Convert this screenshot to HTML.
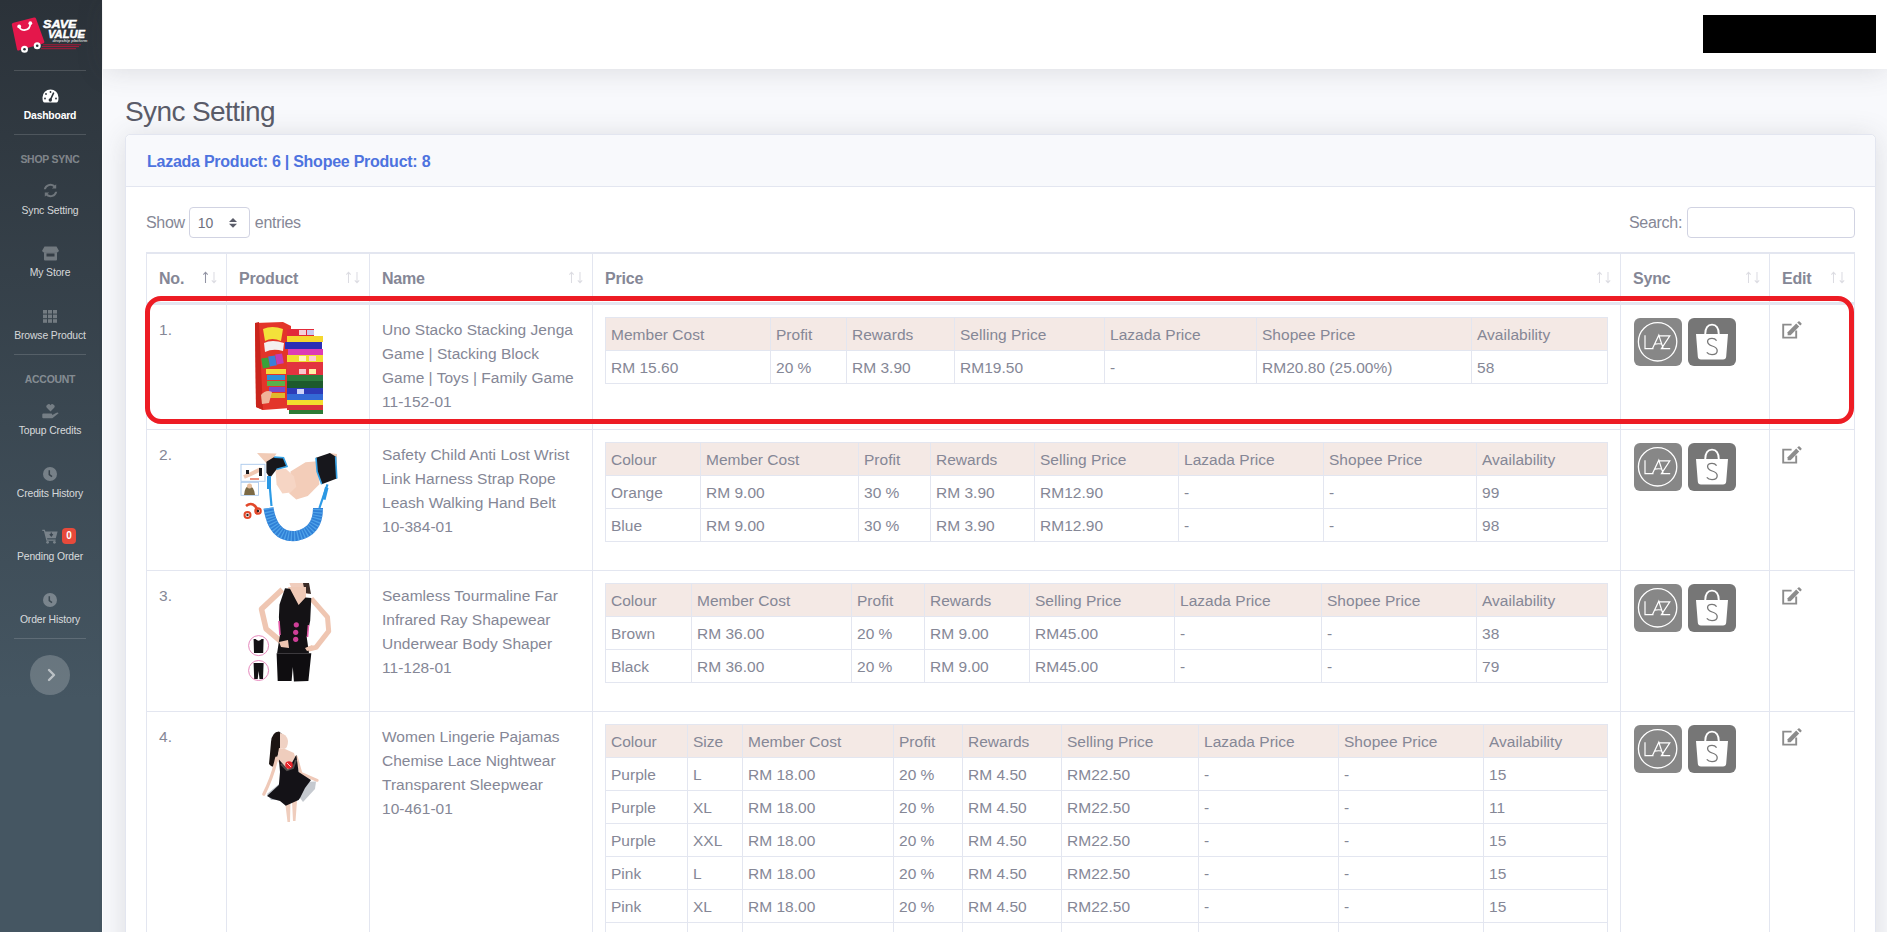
<!DOCTYPE html>
<html><head><meta charset="utf-8">
<style>
*{box-sizing:border-box;margin:0;padding:0}
html,body{width:1887px;height:932px;overflow:hidden;background:#f8f9fc;font-family:"Liberation Sans",sans-serif;color:#858796}
#sb{position:absolute;left:0;top:0;width:102px;height:932px;background:linear-gradient(180deg,#2b3239 0px,#455662 700px)}
#sbline{position:absolute;left:102px;top:0;width:1px;height:932px;background:#fff}
#top{position:absolute;left:103px;top:0;width:1784px;height:69px;background:#fff;box-shadow:0 2px 28px 0 rgba(58,59,69,.15);z-index:2}
#blk{position:absolute;left:1600px;top:15px;width:173px;height:38px;background:#000}
#title{position:absolute;left:125px;top:94px;font-size:28px;line-height:36px;color:#5a5c69;letter-spacing:-0.6px;white-space:nowrap}
#card{position:absolute;left:125px;top:134px;width:1751px;height:900px;background:#fff;border:1px solid #e3e6f0;border-radius:5px;box-shadow:0 2px 28px 0 rgba(58,59,69,.15)}
#chead{position:absolute;left:0;top:0;width:1749px;height:52px;background:#f8f9fc;border-bottom:1px solid #e3e6f0;border-radius:5px 5px 0 0}
#chead span{position:absolute;left:21px;top:15px;font-size:16px;line-height:24px;font-weight:bold;color:#4e73df;letter-spacing:-0.25px;white-space:nowrap}

#len{position:absolute;left:146px;top:207px;height:31px;font-size:16px;line-height:31px;white-space:nowrap;letter-spacing:-0.3px}
#len .sel{display:inline-block;position:relative;vertical-align:top;width:61px;height:31px;margin:0 5px 0 4px;border:1px solid #d1d3e2;border-radius:4px;background:#fff;font-size:14px;color:#6e707e;line-height:31px;padding-left:8px;letter-spacing:0}
#len .sel svg{position:absolute;left:39px;top:10px}
#srch{position:absolute;left:1629px;top:207px;height:31px;font-size:16px;line-height:31px;white-space:nowrap;letter-spacing:-0.3px}
#srch .inp{position:absolute;left:58px;top:0;width:168px;height:31px;border:1px solid #d1d3e2;border-radius:4px;background:#fff}
#mt{position:absolute;left:146px;top:252px;width:1708px;border-collapse:collapse;table-layout:fixed;font-size:15.5px;line-height:24px;letter-spacing:0.02px}
#mt th,#mt td{border:1px solid #e3e6f0;padding:13px 12px 11px 12px;vertical-align:top;text-align:left;white-space:nowrap}
#mt th{border-top:2px solid #e3e6f0;border-bottom:3px solid #e3e6f0;font-weight:bold;position:relative;font-size:16px;letter-spacing:-0.2px;padding-top:13px;padding-bottom:11px}
#mt th .ar{position:absolute;top:17px;right:9px}
.it{border-collapse:collapse;width:1002px;table-layout:fixed;margin-top:-1px;margin-bottom:17px}
.it td,.it th{border:1px solid #e3e6f0 !important;padding:5px 5px 3px 5px !important;font-weight:normal !important;height:33px !important;line-height:24px;white-space:nowrap}
.it tr.h td{background:#f4e9e5}
.pimg{display:block;width:100px;height:100px;margin-top:-1px;margin-bottom:1px}
.sync{position:relative;height:48px;margin-top:0}
.laz,.shp{position:absolute;top:0;width:48px;height:48px;border-radius:6px}
.laz{left:1px;background:#878787}
.shp{left:55px;background:#767676}
.edit{position:absolute}
#red{position:absolute;left:145px;top:296px;width:1709px;height:128px;border:5px solid #ed1c24;border-radius:16px;z-index:5}

.sbt{position:absolute;left:0;width:100px;text-align:center;font-size:10.4px;letter-spacing:-.12px;margin-top:0.5px;line-height:12px;color:rgba(255,255,255,.8);white-space:nowrap}
.sbh{position:absolute;left:0;width:100px;text-align:center;font-size:10.4px;letter-spacing:-.2px;margin-top:0.5px;line-height:12px;font-weight:bold;color:rgba(255,255,255,.4);white-space:nowrap}
.sbd{position:absolute;left:14px;width:72px;height:1px;background:rgba(255,255,255,.15)}
.ic{position:absolute}
</style></head><body>

<div id="sb">
<svg class="ic" style="left:0;top:0" width="102" height="70" viewBox="0 0 102 70">
 <path d="M13.5 22.8 L34 17.6 Q35.6 17.3 36.1 18.8 L44.3 41.6 Q44.6 43 43.2 43.4 L18.6 50.6 Q17.3 50.9 17 49.6 L11.8 24.6 Q11.6 23.2 13.5 22.8Z" fill="#e4174b"/>
 <path d="M19.2 26.4 C20.6 31.8 30.2 31.6 30.3 23.2" stroke="#fff" stroke-width="1.8" fill="none" stroke-linecap="round"/>
 <circle cx="19.2" cy="26.4" r="1.9" fill="#fff"/><circle cx="30.3" cy="23.2" r="1.9" fill="#fff"/>
 <circle cx="24.5" cy="49.2" r="3.5" fill="#fff"/><circle cx="24.5" cy="49.2" r="1.3" fill="#2b3239"/>
 <circle cx="37.2" cy="45.8" r="3.5" fill="#fff"/><circle cx="37.2" cy="45.8" r="1.3" fill="#2b3239"/>
 <text x="43" y="28" font-family="Liberation Sans" font-weight="bold" font-style="italic" font-size="11.5" fill="#fff" stroke="#fff" stroke-width="0.5" textLength="33.5" lengthAdjust="spacingAndGlyphs">SAVE</text>
 <text x="48" y="38" font-family="Liberation Sans" font-weight="bold" font-style="italic" font-size="11.5" fill="#fff" stroke="#fff" stroke-width="0.5" textLength="37" lengthAdjust="spacingAndGlyphs">VALUE</text>
 <text x="52.5" y="42" font-family="Liberation Sans" font-weight="bold" font-style="italic" font-size="2.9" fill="rgba(255,255,255,.75)" textLength="35" lengthAdjust="spacingAndGlyphs">dropship platform</text>
 <rect x="43" y="44.2" width="38" height="1.1" fill="#9a1d3a"/>
 <rect x="42" y="46" width="37" height="1.1" fill="#9a1d3a"/>
 <rect x="41" y="48.1" width="35" height="1.1" fill="#9a1d3a"/>
</svg>
<div class="sbd" style="top:70px"></div>
<svg class="ic" style="left:42px;top:89px" width="17" height="14" viewBox="0 0 17 14">
 <path d="M8.5 0.5 A8 8 0 0 1 16.5 8.5 Q16.5 13.5 14.5 13.5 H2.5 Q0.5 13.5 0.5 8.5 A8 8 0 0 1 8.5 0.5Z" fill="#fff"/>
 <circle cx="8.5" cy="3" r="0.9" fill="#2b3239"/><circle cx="4" cy="5" r="0.9" fill="#2b3239"/><circle cx="3" cy="9.5" r="0.9" fill="#2b3239"/><circle cx="14" cy="9.5" r="0.9" fill="#2b3239"/>
 <path d="M8.3 11 L11.5 4.2" stroke="#2b3239" stroke-width="1.6" stroke-linecap="round"/><circle cx="8.3" cy="11" r="1.7" fill="#2b3239"/>
</svg>
<div class="sbh" style="top:109px;color:#fff">Dashboard</div>
<div class="sbd" style="top:134px"></div>
<div class="sbh" style="top:153px">SHOP SYNC</div>
<svg class="ic" style="left:43px;top:183px" width="15" height="15" viewBox="0 0 15 15">
 <path d="M13.2 1.2 V5.6 H8.8 L10.5 3.9 A4.8 4.8 0 0 0 2.8 6.2 H0.8 A6.8 6.8 0 0 1 11.9 2.5Z" fill="rgba(255,255,255,.3)"/>
 <path d="M1.8 13.8 V9.4 H6.2 L4.5 11.1 A4.8 4.8 0 0 0 12.2 8.8 H14.2 A6.8 6.8 0 0 1 3.1 12.5Z" fill="rgba(255,255,255,.3)"/>
</svg>
<div class="sbt" style="top:204px">Sync Setting</div>
<svg class="ic" style="left:42px;top:246px" width="17" height="15" viewBox="0 0 17 15">
 <path d="M2.5 0.5 H14.5 L16.8 4.5 Q16.8 6.5 14.8 6.5 H2.2 Q0.2 6.5 0.2 4.5Z" fill="rgba(255,255,255,.3)"/>
 <path d="M2 6.5 H15 V13.5 Q15 14.5 14 14.5 H3 Q2 14.5 2 13.5Z" fill="rgba(255,255,255,.3)"/>
 <rect x="4.5" y="7.5" width="8" height="3" fill="#343d45"/>
</svg>
<div class="sbt" style="top:266px">My Store</div>
<svg class="ic" style="left:43px;top:310px" width="14" height="13" viewBox="0 0 14 13">
 <g fill="rgba(255,255,255,.3)"><rect x="0" y="0" width="4" height="3.6"/><rect x="5" y="0" width="4" height="3.6"/><rect x="10" y="0" width="4" height="3.6"/>
 <rect x="0" y="4.6" width="4" height="3.6"/><rect x="5" y="4.6" width="4" height="3.6"/><rect x="10" y="4.6" width="4" height="3.6"/>
 <rect x="0" y="9.2" width="4" height="3.6"/><rect x="5" y="9.2" width="4" height="3.6"/><rect x="10" y="9.2" width="4" height="3.6"/></g>
</svg>
<div class="sbt" style="top:329px">Browse Product</div>
<div class="sbd" style="top:354px"></div>
<div class="sbh" style="top:373px">ACCOUNT</div>
<svg class="ic" style="left:42px;top:404px" width="17" height="15" viewBox="0 0 17 15">
 <path d="M8.5 7.5 L4.8 3.8 A2.2 2.2 0 0 1 8.5 1.2 A2.2 2.2 0 0 1 12.2 3.8Z" fill="rgba(255,255,255,.3)"/>
 <path d="M0.3 10.5 Q0.3 9.5 1.3 9.5 H9 Q10.3 9.5 10.3 10.6 Q10.3 11.5 9 11.5 H6.5 H9.5 L14 9 Q16 8 16.6 9.3 L11 13.8 Q10.5 14.3 9.5 14.3 H1.3 Q0.3 14.3 0.3 13.3Z" fill="rgba(255,255,255,.3)"/>
</svg>
<div class="sbt" style="top:424px">Topup Credits</div>
<svg class="ic" style="left:43px;top:467px" width="14" height="14" viewBox="0 0 14 14">
 <circle cx="7" cy="7" r="7" fill="rgba(255,255,255,.3)"/><path d="M6.3 3.2 V7.6 L9 9.6" stroke="#38434c" stroke-width="1.5" fill="none"/>
</svg>
<div class="sbt" style="top:487px">Credits History</div>
<svg class="ic" style="left:42px;top:529px" width="16" height="15" viewBox="0 0 16 15">
 <path d="M0.3 0.8 H2.8 L3.4 2.5 H15.6 L13.8 9.2 H5 L5.4 10.6 H13.6 V11.8 H4.4 L1.9 2.1 H0.3Z" fill="rgba(255,255,255,.3)"/>
 <circle cx="5.6" cy="13.3" r="1.4" fill="rgba(255,255,255,.3)"/><circle cx="12.4" cy="13.3" r="1.4" fill="rgba(255,255,255,.3)"/>
 <path d="M9.3 3.6 V6.3 M7.8 5.2 L9.3 7 L10.8 5.2" stroke="#3a4650" stroke-width="1.2" fill="none"/>
</svg>
<div style="position:absolute;left:62px;top:528px;width:14px;height:16px;border-radius:4px;background:#e74a3b;color:#fff;font-size:10px;font-weight:bold;line-height:16px;text-align:center">0</div>
<div class="sbt" style="top:550px">Pending Order</div>
<svg class="ic" style="left:43px;top:593px" width="14" height="14" viewBox="0 0 14 14">
 <circle cx="7" cy="7" r="7" fill="rgba(255,255,255,.3)"/><path d="M6.3 3.2 V7.6 L9 9.6" stroke="#3d4a53" stroke-width="1.5" fill="none"/>
</svg>
<div class="sbt" style="top:613px">Order History</div>
<div class="sbd" style="top:638px"></div>
<div style="position:absolute;left:30px;top:655px;width:40px;height:40px;border-radius:50%;background:rgba(255,255,255,.2)"></div>
<svg class="ic" style="left:47px;top:668px" width="10" height="14" viewBox="0 0 10 14">
 <path d="M2 2 L7 7 L2 12" stroke="rgba(255,255,255,.55)" stroke-width="2.4" fill="none" stroke-linecap="round" stroke-linejoin="round"/>
</svg>
</div>

<div id="sbline"></div>
<div id="top"><div id="blk"></div></div>
<div id="title">Sync Setting</div>
<div id="card">
  <div id="chead"><span>Lazada Product: 6 | Shopee Product: 8</span></div>
</div>

<div id="len">Show<span class="sel">10<svg width="8" height="10" viewBox="0 0 8 10"><path d="M4 0L8 4H0z M0 5.8H8L4 9.8z" fill="#5a5c69"/></svg></span>entries</div>
<div id="srch">Search:<div class="inp"></div></div>
<table id="mt"><colgroup><col style="width:80px"><col style="width:143px"><col style="width:223px"><col style="width:1028px"><col style="width:149px"><col style="width:85px"></colgroup><tr><th>No.<svg class="ar" width="14" height="13" viewBox="0 0 14 13"><path d="M2.5 1.3V12 M0.3 3.6L2.5 1.3L4.7 3.6" stroke="#9193a3" stroke-width="1.05" fill="none"/><path d="M11 1V11.7 M8.8 9.4L11 11.7L13.2 9.4" stroke="#dcdce2" stroke-width="1.05" fill="none"/></svg></th><th>Product<svg class="ar" width="14" height="13" viewBox="0 0 14 13"><path d="M2.5 1.3V12 M0.3 3.6L2.5 1.3L4.7 3.6" stroke="#dcdce2" stroke-width="1.05" fill="none"/><path d="M11 1V11.7 M8.8 9.4L11 11.7L13.2 9.4" stroke="#dcdce2" stroke-width="1.05" fill="none"/></svg></th><th>Name<svg class="ar" width="14" height="13" viewBox="0 0 14 13"><path d="M2.5 1.3V12 M0.3 3.6L2.5 1.3L4.7 3.6" stroke="#dcdce2" stroke-width="1.05" fill="none"/><path d="M11 1V11.7 M8.8 9.4L11 11.7L13.2 9.4" stroke="#dcdce2" stroke-width="1.05" fill="none"/></svg></th><th>Price<svg class="ar" width="14" height="13" viewBox="0 0 14 13"><path d="M2.5 1.3V12 M0.3 3.6L2.5 1.3L4.7 3.6" stroke="#dcdce2" stroke-width="1.05" fill="none"/><path d="M11 1V11.7 M8.8 9.4L11 11.7L13.2 9.4" stroke="#dcdce2" stroke-width="1.05" fill="none"/></svg></th><th>Sync<svg class="ar" width="14" height="13" viewBox="0 0 14 13"><path d="M2.5 1.3V12 M0.3 3.6L2.5 1.3L4.7 3.6" stroke="#dcdce2" stroke-width="1.05" fill="none"/><path d="M11 1V11.7 M8.8 9.4L11 11.7L13.2 9.4" stroke="#dcdce2" stroke-width="1.05" fill="none"/></svg></th><th>Edit<svg class="ar" width="14" height="13" viewBox="0 0 14 13"><path d="M2.5 1.3V12 M0.3 3.6L2.5 1.3L4.7 3.6" stroke="#dcdce2" stroke-width="1.05" fill="none"/><path d="M11 1V11.7 M8.8 9.4L11 11.7L13.2 9.4" stroke="#dcdce2" stroke-width="1.05" fill="none"/></svg></th></tr><tr><td>1.</td><td><div class="pimg"><svg width="100" height="100" viewBox="0 0 100 100">
<path d="M16 6 L44 5 L52 9 L51 91 L24 93 L17 90Z" fill="#e3352a"/>
<path d="M16 6 L20 5 L24 93 L17 90Z" fill="#c9241c"/>
<path d="M24 12 Q33 8 44 12 L42 24 Q33 20 26 24Z" fill="#f3e23a"/>
<path d="M25 26 Q33 22 45 26 L44 34 Q34 31 26 35Z" fill="#f4f0f0"/>
<rect x="23" y="41" width="7" height="10" fill="#3aa33a" transform="rotate(-10 26 46)"/><rect x="30" y="39" width="7" height="10" fill="#3c7ed8" transform="rotate(-10 33 44)"/><rect x="37" y="37" width="7" height="10" fill="#c23bb7" transform="rotate(-10 40 42)"/>
<rect x="27" y="52" width="20" height="5" fill="#f4d93a"/><rect x="28" y="58" width="18" height="5" fill="#2d8fd8"/><rect x="28" y="64" width="18" height="5" fill="#5bb04a"/><rect x="30" y="70" width="16" height="5" fill="#7a49c8"/><rect x="30" y="76" width="16" height="5" fill="#e0b92c"/>
<path d="M22 78 Q27 72 33 75 L30 86 L23 87Z" fill="#f0b39a"/>
<rect x="48" y="12" width="27" height="7" fill="#e22a3a"/><rect x="48" y="19" width="36" height="6" fill="#f5d82e"/><rect x="46" y="25" width="37" height="7" fill="#2b2fb5"/><rect x="49" y="32" width="35" height="6" fill="#dd3bb5"/>
<rect x="48" y="38" width="36" height="7" fill="#f2dd30"/><rect x="48" y="45" width="36" height="6" fill="#e2333f"/><rect x="48" y="51" width="36" height="7" fill="#e2333f"/><rect x="48" y="58" width="36" height="6" fill="#2c7b3c"/>
<rect x="48" y="64" width="36" height="7" fill="#1d5a2c"/><rect x="48" y="71" width="36" height="6" fill="#2d3bb8"/><rect x="48" y="77" width="36" height="6" fill="#3369d6"/><rect x="48" y="83" width="36" height="5" fill="#f2de2e"/>
<rect x="48" y="88" width="36" height="5" fill="#d9303a"/><rect x="50" y="93" width="34" height="4" fill="#2e7a36"/>
<rect x="60" y="13" width="7" height="5" fill="#f5d0d8"/><rect x="68" y="13" width="7" height="5" fill="#c9c9f0"/><rect x="60" y="39" width="7" height="5" fill="#fff3c0"/><rect x="70" y="39" width="7" height="5" fill="#fbd0d6"/>
<rect x="60" y="52" width="7" height="5" fill="#f9c6cc"/><rect x="70" y="52" width="7" height="5" fill="#fff0a8"/><rect x="58" y="72" width="7" height="5" fill="#d0d4f8"/>
</svg></div></td><td>Uno Stacko Stacking Jenga<br>Game | Stacking Block<br>Game | Toys | Family Game<br>11-152-01</td><td><table class="it"><colgroup><col style="width:165px"><col style="width:76px"><col style="width:108px"><col style="width:150px"><col style="width:152px"><col style="width:215px"><col style="width:136px"></colgroup><tr class="h"><td>Member Cost</td><td>Profit</td><td>Rewards</td><td>Selling Price</td><td>Lazada Price</td><td>Shopee Price</td><td>Availability</td></tr><tr><td>RM 15.60</td><td>20 %</td><td>RM 3.90</td><td>RM19.50</td><td>-</td><td>RM20.80 (25.00%)</td><td>58</td></tr></table></td><td><div class="sync"><div class="laz"><svg width="48" height="48" viewBox="0 0 48 48"><circle cx="23.6" cy="23.8" r="19.2" stroke="#fff" stroke-width="1.3" fill="none"/>
<path d="M11 17.2 V30.6 H19.5 M18.5 30.6 L24.8 17.2 L29.2 30.6 M20.8 26.2 Q24 25.4 27.6 26 M25.2 17.8 H35.8 L27.4 30.6 H36.2" stroke="#fff" stroke-width="1.2" fill="none" stroke-linejoin="miter"/></svg></div><div class="shp"><svg width="48" height="48" viewBox="0 0 48 48"><path d="M17.2 16.2 Q17.4 6.6 24 6.6 Q30.6 6.6 30.8 16.2" stroke="#fff" stroke-width="1.9" fill="none"/>
<path d="M8 16 H40 L38.2 38.6 Q38 41.6 35 41.6 H13 Q10 41.6 9.8 38.6Z" fill="#fff"/>
<path d="M28.6 22.6 Q27 20.4 24 20.4 Q19.4 20.4 19.6 23.8 Q19.8 26.6 24.2 28 Q29.4 29.6 29.2 33 Q29 36.6 24 36.6 Q20.4 36.6 18.8 34.4" stroke="#777" stroke-width="1.3" fill="none"/></svg></div></div></td><td><svg class="edit" style="margin:3px 0 0 -1px;display:block" width="21" height="18" viewBox="0 0 21 18">
<path d="M10.6 3.6 H2.2 V16.6 H15.2 V9.6" stroke="#8c8c8c" stroke-width="1.9" fill="none"/>
<path d="M6.6 14.2 L6.6 11.2 L15.2 2.6 L18.2 5.6 L9.6 14.2Z" fill="#8c8c8c"/>
<path d="M16.2 1.6 L17.4 0.4 Q18 -0.1 18.6 0.4 L20.4 2.2 Q20.9 2.8 20.4 3.4 L19.2 4.6Z" fill="#8c8c8c"/></svg></td></tr><tr><td>2.</td><td><div class="pimg"><svg width="100" height="100" viewBox="0 0 100 100">
<path d="M18 11 L37.6 11.6 L31.8 19.2 L27.1 20.9Z" fill="#f1cbb6"/>
<path d="M90 11 L98 12 L98 22 L93 20Z" fill="#f1cbb6"/>
<path d="M51.5 29.6 L66.5 20.3 L78.1 19.2 L80.4 42.3 L68.8 54 L57.3 57.4 L50.3 51.6Z" fill="#f3cdb9"/>
<path d="M36.4 27.3 L46.8 26.7 L54.9 34.2 L57.3 44.7 L51.5 50.5 L43.4 51.6 L37.6 42.4Z" fill="#f6d5c4"/>
<path d="M27.4 19.8 L35.2 15.1 L44.5 15.7 L48 24.4 L37.6 27.3 L31 36 L27.4 30.8Z" fill="#17171c"/>
<path d="M35.2 15.1 L44.5 15.7 L48 24.4 L37.6 27.3" stroke="#35a2e6" stroke-width="1.6" fill="none"/>
<path d="M77 15.7 L90.9 11 L96.6 14.5 L97.8 36.6 L82.7 42.3 L78.1 29.6Z" fill="#17171c"/>
<path d="M77 15.7 L78.1 29.6 L82.7 42.3 M96.6 14.5 L97.8 36.6" stroke="#35a2e6" stroke-width="1.6" fill="none"/>
<path d="M29.8 34 L32.5 64" stroke="#2c9be6" stroke-width="2.2"/><rect x="28" y="34" width="4" height="13" fill="#2b98e3"/>
<path d="M88.5 42.3 L80.4 66" stroke="#2c9be6" stroke-width="2.2"/><path d="M86 45 L89.5 46 L86.5 58 L83 57Z" fill="#2b98e3"/>
<path d="M29.5 66 Q34 96 57 94 Q79 90 79 66" stroke="#2f7fd6" stroke-width="10" fill="none"/>
<path d="M29.5 66 Q34 96 57 94 Q79 90 79 66" stroke="#5db0f0" stroke-width="10" fill="none" stroke-dasharray="1.3 1.7" opacity="0.7"/>
<rect x="2" y="22.3" width="24" height="17" fill="#fff" stroke="#a9c8ec" stroke-width="0.9"/>
<path d="M5 35 L12 32 L22 27" stroke="#f0c8b2" stroke-width="4" fill="none"/><rect x="7" y="28" width="3" height="4" fill="#1c1c20"/><rect x="20" y="26" width="3" height="8" fill="#1c1c20"/><path d="M11 37 H20" stroke="#e24a2a" stroke-width="1.2"/>
<rect x="2" y="40.3" width="17.5" height="13" fill="#fff" stroke="#a9c8ec" stroke-width="0.9"/>
<path d="M5 53 Q6 44 10 44 Q15 44 16 53Z" fill="#7c6a45"/><circle cx="10.5" cy="44" r="2.5" fill="#e8c0a0"/>
<path d="M7 64 Q12 60 16 64 Q20 68 17 72" stroke="#e2482a" stroke-width="2.6" fill="none"/><circle cx="8.5" cy="73" r="3" fill="none" stroke="#e2482a" stroke-width="2"/><circle cx="19" cy="69" r="2.8" fill="none" stroke="#e2482a" stroke-width="2"/>
<circle cx="8.5" cy="73" r="1.2" fill="#2a2222"/><circle cx="19" cy="69" r="1.2" fill="#2a2222"/>
</svg></div></td><td>Safety Child Anti Lost Wrist<br>Link Harness Strap Rope<br>Leash Walking Hand Belt<br>10-384-01</td><td><table class="it"><colgroup><col style="width:95px"><col style="width:158px"><col style="width:72px"><col style="width:104px"><col style="width:144px"><col style="width:145px"><col style="width:153px"><col style="width:131px"></colgroup><tr class="h"><td>Colour</td><td>Member Cost</td><td>Profit</td><td>Rewards</td><td>Selling Price</td><td>Lazada Price</td><td>Shopee Price</td><td>Availability</td></tr><tr><td>Orange</td><td>RM 9.00</td><td>30 %</td><td>RM 3.90</td><td>RM12.90</td><td>-</td><td>-</td><td>99</td></tr><tr><td>Blue</td><td>RM 9.00</td><td>30 %</td><td>RM 3.90</td><td>RM12.90</td><td>-</td><td>-</td><td>98</td></tr></table></td><td><div class="sync"><div class="laz"><svg width="48" height="48" viewBox="0 0 48 48"><circle cx="23.6" cy="23.8" r="19.2" stroke="#fff" stroke-width="1.3" fill="none"/>
<path d="M11 17.2 V30.6 H19.5 M18.5 30.6 L24.8 17.2 L29.2 30.6 M20.8 26.2 Q24 25.4 27.6 26 M25.2 17.8 H35.8 L27.4 30.6 H36.2" stroke="#fff" stroke-width="1.2" fill="none" stroke-linejoin="miter"/></svg></div><div class="shp"><svg width="48" height="48" viewBox="0 0 48 48"><path d="M17.2 16.2 Q17.4 6.6 24 6.6 Q30.6 6.6 30.8 16.2" stroke="#fff" stroke-width="1.9" fill="none"/>
<path d="M8 16 H40 L38.2 38.6 Q38 41.6 35 41.6 H13 Q10 41.6 9.8 38.6Z" fill="#fff"/>
<path d="M28.6 22.6 Q27 20.4 24 20.4 Q19.4 20.4 19.6 23.8 Q19.8 26.6 24.2 28 Q29.4 29.6 29.2 33 Q29 36.6 24 36.6 Q20.4 36.6 18.8 34.4" stroke="#777" stroke-width="1.3" fill="none"/></svg></div></div></td><td><svg class="edit" style="margin:3px 0 0 -1px;display:block" width="21" height="18" viewBox="0 0 21 18">
<path d="M10.6 3.6 H2.2 V16.6 H15.2 V9.6" stroke="#8c8c8c" stroke-width="1.9" fill="none"/>
<path d="M6.6 14.2 L6.6 11.2 L15.2 2.6 L18.2 5.6 L9.6 14.2Z" fill="#8c8c8c"/>
<path d="M16.2 1.6 L17.4 0.4 Q18 -0.1 18.6 0.4 L20.4 2.2 Q20.9 2.8 20.4 3.4 L19.2 4.6Z" fill="#8c8c8c"/></svg></td></tr><tr><td>3.</td><td><div class="pimg"><svg width="100" height="100" viewBox="0 0 100 100">
<path d="M50.3 0 L66 0 Q69 4 70 11 L64 10 Q58 8 52 4Z" fill="#f0cdbd"/><path d="M64 0 L70 0 L72 11 L66 10Z" fill="#3b2b26"/>
<path d="M49 4 L67 4 L67 16 L59.6 24 L50 8Z" fill="#efc9b6"/>
<path d="M43.3 6.4 L22.5 26.1 L27.1 45.8 L43.3 59.7" stroke="#efc6b2" stroke-width="5.5" fill="none" stroke-linejoin="round"/>
<path d="M72.3 15.7 L88.5 34.2 L89.7 48.1 L77 64.4 L66.5 66.7" stroke="#efc6b2" stroke-width="5" fill="none" stroke-linejoin="round"/>
<path d="M40.5 21.5 L46 5.3 L51 5.8 L59.6 22 L66.5 14.5 L72.3 15 L71.2 37.7 L67.7 54 L70 70.2 L38.1 70.2 L41 51.6 L39.9 34.2Z" fill="#141215"/>
<path d="M40 38 L41 52 M69.5 42 L68.5 54" stroke="#e35aa8" stroke-width="1.6"/>
<circle cx="57.3" cy="41.8" r="2.6" fill="#cf3f98"/><circle cx="56.7" cy="49.3" r="2.6" fill="#cf3f98"/><circle cx="56.7" cy="56.3" r="2.6" fill="#cf3f98"/>
<path d="M40 59 L49 57 L50 65 L42 64Z M66 65 L73 62 L76 66 L68 68Z" fill="#efc6b2"/>
<path d="M37.6 70.2 L72.3 70.2 L69.4 98 L54.9 98.5 L53.8 84 L52.6 98 L38.7 98Z" fill="#0f0d10"/>
<circle cx="19.6" cy="62.6" r="10" fill="#fff" stroke="#e27ab4" stroke-width="0.9"/><path d="M14.6 56 L16.6 56 Q19.6 59.5 22.6 56 L24.6 56 L24.2 70 L15 70Z" fill="#141215"/>
<circle cx="19.6" cy="87.5" r="10" fill="#fff" stroke="#e27ab4" stroke-width="0.9"/><path d="M14.6 80 H24.6 L24 96 H20.5 L19.6 88 L18.7 96 H15.2Z" fill="#141215"/>
</svg></div></td><td>Seamless Tourmaline Far<br>Infrared Ray Shapewear<br>Underwear Body Shaper<br>11-128-01</td><td><table class="it"><colgroup><col style="width:86px"><col style="width:160px"><col style="width:73px"><col style="width:105px"><col style="width:145px"><col style="width:147px"><col style="width:155px"><col style="width:131px"></colgroup><tr class="h"><td>Colour</td><td>Member Cost</td><td>Profit</td><td>Rewards</td><td>Selling Price</td><td>Lazada Price</td><td>Shopee Price</td><td>Availability</td></tr><tr><td>Brown</td><td>RM 36.00</td><td>20 %</td><td>RM 9.00</td><td>RM45.00</td><td>-</td><td>-</td><td>38</td></tr><tr><td>Black</td><td>RM 36.00</td><td>20 %</td><td>RM 9.00</td><td>RM45.00</td><td>-</td><td>-</td><td>79</td></tr></table></td><td><div class="sync"><div class="laz"><svg width="48" height="48" viewBox="0 0 48 48"><circle cx="23.6" cy="23.8" r="19.2" stroke="#fff" stroke-width="1.3" fill="none"/>
<path d="M11 17.2 V30.6 H19.5 M18.5 30.6 L24.8 17.2 L29.2 30.6 M20.8 26.2 Q24 25.4 27.6 26 M25.2 17.8 H35.8 L27.4 30.6 H36.2" stroke="#fff" stroke-width="1.2" fill="none" stroke-linejoin="miter"/></svg></div><div class="shp"><svg width="48" height="48" viewBox="0 0 48 48"><path d="M17.2 16.2 Q17.4 6.6 24 6.6 Q30.6 6.6 30.8 16.2" stroke="#fff" stroke-width="1.9" fill="none"/>
<path d="M8 16 H40 L38.2 38.6 Q38 41.6 35 41.6 H13 Q10 41.6 9.8 38.6Z" fill="#fff"/>
<path d="M28.6 22.6 Q27 20.4 24 20.4 Q19.4 20.4 19.6 23.8 Q19.8 26.6 24.2 28 Q29.4 29.6 29.2 33 Q29 36.6 24 36.6 Q20.4 36.6 18.8 34.4" stroke="#777" stroke-width="1.3" fill="none"/></svg></div></div></td><td><svg class="edit" style="margin:3px 0 0 -1px;display:block" width="21" height="18" viewBox="0 0 21 18">
<path d="M10.6 3.6 H2.2 V16.6 H15.2 V9.6" stroke="#8c8c8c" stroke-width="1.9" fill="none"/>
<path d="M6.6 14.2 L6.6 11.2 L15.2 2.6 L18.2 5.6 L9.6 14.2Z" fill="#8c8c8c"/>
<path d="M16.2 1.6 L17.4 0.4 Q18 -0.1 18.6 0.4 L20.4 2.2 Q20.9 2.8 20.4 3.4 L19.2 4.6Z" fill="#8c8c8c"/></svg></td></tr><tr><td>4.</td><td><div class="pimg"><svg width="100" height="100" viewBox="0 0 100 100">
<path d="M40 7.6 Q33 8 32 18 Q31 30 30 40 Q33 44 36 42 L38 34 L41 24 L43 10Z" fill="#1c1412"/>
<path d="M41 9 Q48 10 49 17 Q49 24 45 25 L41 24Z" fill="#f0d2c4"/>
<path d="M40 24 L46 25 L55 29 L58 40 L52 47 L45 46 L38 36Z" fill="#efcdbd"/>
<path d="M37.6 34.2 Q34 52 24.8 70.2" stroke="#efc9b8" stroke-width="3.2" fill="none" stroke-linecap="round"/>
<path d="M57.3 33.1 L61.9 49.3 L78.1 56.3" stroke="#efc9b8" stroke-width="3" fill="none" stroke-linecap="round"/>
<path d="M46 77 L51.5 77 L51 98 L48.5 98Z M53 77 L58 77 L56.5 97 L54 97Z" fill="#efcdbd"/>
<path d="M28 70 L40 60 L42 76 L32 76Z" fill="#b9bec6"/><path d="M60 58 L77 57.4 L76 65 L64 78 L58 70Z" fill="#c5c9cf"/>
<path d="M39.9 35.4 L49.1 46 L57.3 30.8 L59.6 48.1 L72 56 L66 64 L61 74 L59.6 76 L46.8 81.7 L41 77.1 L33 74.8 L28 72 L39.9 60.9 L41 48.1Z" fill="#141217"/>
<path d="M42 40 L48 46 L54 44 L57 36" stroke="#6b6460" stroke-width="2" fill="none" opacity="0.7"/>
<circle cx="50" cy="41" r="3.8" fill="#e8252b"/><path d="M48 39 L52 43" stroke="#fff" stroke-width="0.8"/>
</svg></div></td><td>Women Lingerie Pajamas<br>Chemise Lace Nightwear<br>Transparent Sleepwear<br>10-461-01</td><td><table class="it"><colgroup><col style="width:82px"><col style="width:55px"><col style="width:151px"><col style="width:69px"><col style="width:99px"><col style="width:137px"><col style="width:140px"><col style="width:145px"><col style="width:124px"></colgroup><tr class="h"><td>Colour</td><td>Size</td><td>Member Cost</td><td>Profit</td><td>Rewards</td><td>Selling Price</td><td>Lazada Price</td><td>Shopee Price</td><td>Availability</td></tr><tr><td>Purple</td><td>L</td><td>RM 18.00</td><td>20 %</td><td>RM 4.50</td><td>RM22.50</td><td>-</td><td>-</td><td>15</td></tr><tr><td>Purple</td><td>XL</td><td>RM 18.00</td><td>20 %</td><td>RM 4.50</td><td>RM22.50</td><td>-</td><td>-</td><td>11</td></tr><tr><td>Purple</td><td>XXL</td><td>RM 18.00</td><td>20 %</td><td>RM 4.50</td><td>RM22.50</td><td>-</td><td>-</td><td>15</td></tr><tr><td>Pink</td><td>L</td><td>RM 18.00</td><td>20 %</td><td>RM 4.50</td><td>RM22.50</td><td>-</td><td>-</td><td>15</td></tr><tr><td>Pink</td><td>XL</td><td>RM 18.00</td><td>20 %</td><td>RM 4.50</td><td>RM22.50</td><td>-</td><td>-</td><td>15</td></tr><tr><td>Pink</td><td>XXL</td><td>RM 18.00</td><td>20 %</td><td>RM 4.50</td><td>RM22.50</td><td>-</td><td>-</td><td>15</td></tr><tr><td>Black</td><td>L</td><td>RM 18.00</td><td>20 %</td><td>RM 4.50</td><td>RM22.50</td><td>-</td><td>-</td><td>15</td></tr></table></td><td><div class="sync"><div class="laz"><svg width="48" height="48" viewBox="0 0 48 48"><circle cx="23.6" cy="23.8" r="19.2" stroke="#fff" stroke-width="1.3" fill="none"/>
<path d="M11 17.2 V30.6 H19.5 M18.5 30.6 L24.8 17.2 L29.2 30.6 M20.8 26.2 Q24 25.4 27.6 26 M25.2 17.8 H35.8 L27.4 30.6 H36.2" stroke="#fff" stroke-width="1.2" fill="none" stroke-linejoin="miter"/></svg></div><div class="shp"><svg width="48" height="48" viewBox="0 0 48 48"><path d="M17.2 16.2 Q17.4 6.6 24 6.6 Q30.6 6.6 30.8 16.2" stroke="#fff" stroke-width="1.9" fill="none"/>
<path d="M8 16 H40 L38.2 38.6 Q38 41.6 35 41.6 H13 Q10 41.6 9.8 38.6Z" fill="#fff"/>
<path d="M28.6 22.6 Q27 20.4 24 20.4 Q19.4 20.4 19.6 23.8 Q19.8 26.6 24.2 28 Q29.4 29.6 29.2 33 Q29 36.6 24 36.6 Q20.4 36.6 18.8 34.4" stroke="#777" stroke-width="1.3" fill="none"/></svg></div></div></td><td><svg class="edit" style="margin:3px 0 0 -1px;display:block" width="21" height="18" viewBox="0 0 21 18">
<path d="M10.6 3.6 H2.2 V16.6 H15.2 V9.6" stroke="#8c8c8c" stroke-width="1.9" fill="none"/>
<path d="M6.6 14.2 L6.6 11.2 L15.2 2.6 L18.2 5.6 L9.6 14.2Z" fill="#8c8c8c"/>
<path d="M16.2 1.6 L17.4 0.4 Q18 -0.1 18.6 0.4 L20.4 2.2 Q20.9 2.8 20.4 3.4 L19.2 4.6Z" fill="#8c8c8c"/></svg></td></tr></table><div id="red"></div></body></html>
